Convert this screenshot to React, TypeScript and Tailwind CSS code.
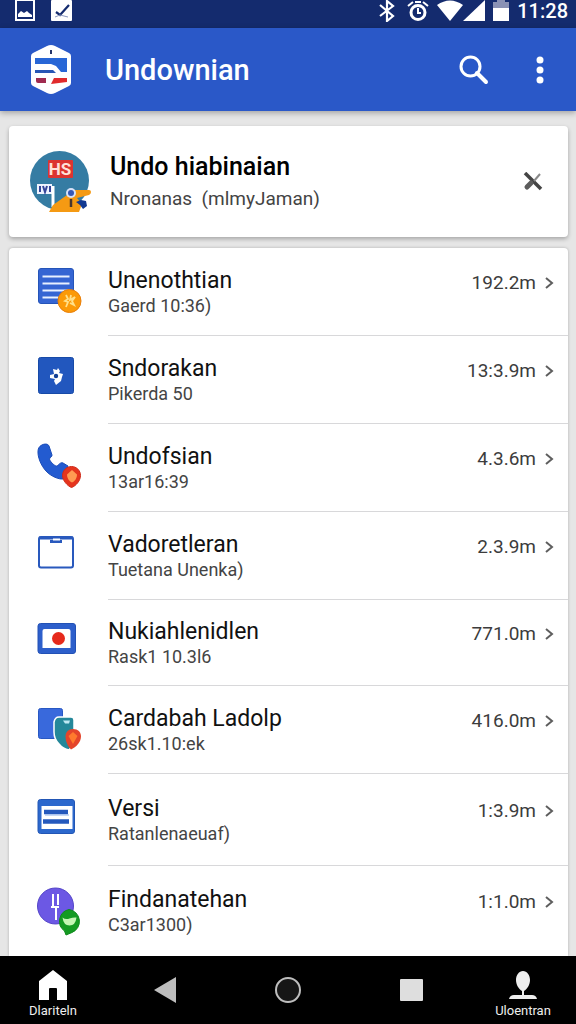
import type { ReactNode } from "react";

type Item = {
  title: string;
  note: string;
  value: string;
  height: string;
  icon: ReactNode;
};

const items: Item[] = [
  {
    title: "Unenothtian",
    note: "Gaerd 10:36)",
    value: "192.2m",
    height: "h-[88px]",
    icon: (
      <>
        <rect x="0.5" y="0.5" width="35" height="35" rx="2.5" fill="#3565d3" stroke="#2554b8" />
        <path d="M4.5 8.5h27M4.5 15.5h27M4.5 22.5h27M4.5 29.5h16" stroke="#e8f0ff" strokeWidth="2.2" />
        <circle cx="31.5" cy="33" r="11.5" fill="#fb9a08" stroke="#e97f0a" />
        <path d="M28 27l2 4-3 2 3 1-2 5M33 27l-1 5 5-3-3 4 2 4-4-2" stroke="#ffe08a" strokeWidth="1.8" fill="none" />
      </>
    ),
  },
  {
    title: "Sndorakan",
    note: "Pikerda 50",
    value: "13:3.9m",
    height: "h-[88px]",
    icon: (
      <>
        <rect x="0.5" y="1.5" width="35" height="36" rx="2" fill="#2257be" stroke="#174aa7" />
        <path
          d="M15 13l4 1 1-2 2 3-1 2 4 1-1 3-1 4-5 4-2-4 1-2-5-1v-3l4-1z"
          fill="#fff"
        />
        <circle cx="18" cy="20" r="2.2" fill="#123f94" />
      </>
    ),
  },
  {
    title: "Undofsian",
    note: "13ar16:39",
    value: "4.3.6m",
    height: "h-[88px]",
    icon: (
      <>
        <path
          d="M3 1.5C6-.5 10-.5 11 2l3 9c.5 1.5-2.5 2.500-2.500 4 0 2 5 7 7 7 1.500 0 4-4.500 6.500-3l5 3-5 13c-4 .5-12-2.500-17-8C3 21.500-.5 13 0 7c.2-3 1.500-4.500 3-5.500z"
          fill="#235bd0"
          stroke="#1c4db8"
        />
        <path
          d="M33.500 22.500c5 0 9 4 9 9s-4.500 10.500-9 12c-4-1.500-9-7-9-12s4-9 9-9z"
          fill="#e5341d"
          stroke="#cf2a18"
        />
        <path d="M34 26l5 4.500c0 4-2.500 7-5 8-2.500-1-5-4-5-8z" fill="#ff9a52" />
      </>
    ),
  },
  {
    title: "Vadoretleran",
    note: "Tuetana Unenka)",
    value: "2.3.9m",
    height: "h-[88px]",
    icon: (
      <>
        <rect x="1" y="5" width="34" height="30.500" rx="2" fill="#fff" stroke="#2959bd" strokeWidth="2" />
        <path d="M1 6h34M12 9.500h12" stroke="#2959bd" strokeWidth="3" />
        <path d="M15 7.500h7" stroke="#fff" strokeWidth="2" />
      </>
    ),
  },
  {
    title: "Nukiahlenidlen",
    note: "Rask1 10.3l6",
    value: "771.0m",
    height: "h-[86px]",
    icon: (
      <>
        <rect x="0" y="4.500" width="37.500" height="30" rx="2.500" fill="#2d5fcb" stroke="#2251b5" />
        <path d="M4.500 12q0-2 2-2h24q2 0 2 2v17h-28z" fill="#fff" />
        <circle cx="20.500" cy="19.500" r="6.500" fill="#e62a1c" />
      </>
    ),
  },
  {
    title: "Cardabah Ladolp",
    note: "26sk1.10:ek",
    value: "416.0m",
    height: "h-[88px]",
    icon: (
      <>
        <rect x="0.500" y="2.500" width="24" height="30" rx="2" fill="#3969dc" stroke="#2858c3" />
        <path
          d="M21 11h12q3 0 3 3v18q-1 8-5 12-6-1-10-6-5-5-5-12v-10q1-5 5-5z"
          fill="#24889a"
          stroke="#fff"
          strokeWidth="1.500"
        />
        <path d="M25 14.500h7l-1 3h-4z" fill="#bfe9f4" />
        <path d="M35 23c5 0 8 3 8 7.500 0 5-4 10-10 13-3-3-5.500-8-5.500-13 0-4.500 3-7.500 7.500-7.500z" fill="#e4452b" />
        <path d="M35 26l4.500 4-4.500 8-4.500-8z" fill="#ff7a2e" />
      </>
    ),
  },
  {
    title: "Versi",
    note: "Ratanlenaeuaf)",
    value: "1:3.9m",
    height: "h-[92px]",
    icon: (
      <>
        <rect x="0" y="3.500" width="36.500" height="34" rx="2.500" fill="#2c68cd" stroke="#2256b5" />
        <path d="M3.500 10h31v23h-31z" fill="#fff" />
        <path d="M6 16h24M5 25.500h26" stroke="#2559bd" strokeWidth="4.500" />
        <path d="M7 19h24" stroke="#8fb1ec" />
      </>
    ),
  },
  {
    title: "Findanatehan",
    note: "C3ar1300)",
    value: "1:1.0m",
    height: "min-h-[88px] grow",
    icon: (
      <>
        <circle cx="17.500" cy="19" r="18" fill="#6c58e4" stroke="#5546c8" />
        <path d="M15 7v13h6M20 7v11M18 20v13M13 20h3" stroke="#fff" strokeWidth="2" fill="none" />
        <path d="M31 22.500a12 12 0 0 1 3 23l-6 2.500-1.500-4A12 12 0 0 1 31 22.500z" fill="#149b22" stroke="#0f8a1c" />
        <path d="M24.500 30.500q3 2.500 7 1t7-1q-1 8-7 8t-7-8z" fill="#c5f6b4" />
      </>
    ),
  },
];

function StatusBar() {
  return (
    <div className="flex h-7 items-start justify-between bg-[#142b6e] pr-2 pl-[15px] text-white">
      <div className="flex gap-4">
        <svg width="20" height="21" viewBox="0 0 20 21" fill="none">
          <path d="M1 0h18v20H1z" stroke="#fff" strokeWidth="2" />
          <path d="M3 17v-3l3-3 3 2 3-2 2 2 3 2v2z" fill="#fff" />
        </svg>
        <svg width="21" height="21" viewBox="0 0 21 21" fill="none">
          <rect width="21" height="21" rx="1" fill="#fff" />
          <path d="M5 12l4 3 9-10" stroke="#142b6e" strokeWidth="2.200" />
          <path d="M4 17l5-2 8 2" stroke="#8c99c0" />
        </svg>
      </div>
      <div className="flex items-start">
        <svg width="16" height="22" viewBox="0 0 16 22" fill="none" stroke="#fff" strokeWidth="2.200">
          <path d="M1 5l13 11-6 5V1l6 5L1 16" />
        </svg>
        <svg className="ml-3" width="22" height="22" viewBox="0 0 22 22" fill="none" stroke="#fff">
          <circle cx="11" cy="12.500" r="7" strokeWidth="3" />
          <path d="M11 8v5h3" strokeWidth="2" />
          <path d="M1 6l5-4M21 6l-5-4M8 2h6" strokeWidth="2" />
        </svg>
        <svg className="ml-2" width="48" height="21" viewBox="0 0 48 21" fill="#fff">
          <path d="M0 5Q13-4 26 5L13 21z" />
          <path d="M26 21L48 0v21z" />
        </svg>
        <svg className="ml-2" width="16" height="21" viewBox="0 0 16 21">
          <path d="M0 2h4V0h8v2h4v8H0z" fill="#8a92b5" />
          <path d="M0 8h16v13H0z" fill="#fff" />
        </svg>
        <span className="ml-2 text-[20px] leading-[22px] font-medium">11:28</span>
      </div>
    </div>
  );
}

function AppBar() {
  return (
    <header className="relative flex h-[83px] items-center bg-[#2a58c8] pr-5 pl-[31px] text-white shadow-[0_2px_6px_rgba(0,0,0,0.3)]">
      <svg width="40" height="49" viewBox="0 0 40 49">
        <path d="M20 0q2 0 4 1l14 7q2 1 2 3v27q0 2-2 3l-14 7q-4 2-8 0L2 41q-2-1-2-3V11q0-2 2-3l14-7q2-1 4-1z" fill="#fff" />
        <path d="M20 5v4" stroke="#27356b" strokeWidth="2" />
        <path d="M4 13h32v14h-6l-5-6-5-2H4z" fill="#2866d6" />
        <path d="M4 25h18l3 3H4z" fill="#2856b5" />
        <path d="M5 33h10v5H7q-2 0-2-2z" fill="#a02b50" />
        <path d="M23 33h13v4l-16 2z" fill="#e02a2c" />
      </svg>
      <h1 className="ml-[34px] flex-1 text-[29px] leading-9 font-medium">Undownian</h1>
      <button type="button" aria-label="Search" className="flex size-12 items-center justify-center">
        <svg width="30" height="30" viewBox="0 0 30 30" fill="none" stroke="#fff">
          <circle cx="11.500" cy="11.500" r="9.500" strokeWidth="3" />
          <path d="M18 18l9 9" strokeWidth="4" strokeLinecap="round" />
        </svg>
      </button>
      <button type="button" aria-label="More options" className="ml-[26px] flex h-12 w-8 items-center justify-center">
        <svg width="8" height="28" viewBox="0 0 8 28" fill="#fff">
          <circle cx="4" cy="4" r="3.500" />
          <circle cx="4" cy="14" r="3.500" />
          <circle cx="4" cy="24" r="3.500" />
        </svg>
      </button>
    </header>
  );
}

function ProfileCard() {
  return (
    <section className="flex h-[111px] items-center rounded bg-white pr-[23px] pl-[21px] shadow-[0_2px_4px_rgba(0,0,0,0.28)]">
      <svg width="61" height="62" viewBox="0 0 61 62">
        <circle cx="29.500" cy="29.500" r="29.500" fill="#357ca3" />
        <rect x="18" y="9" width="25" height="18" rx="1" fill="#dc3430" />
        <text x="30" y="24" textAnchor="middle" fontSize="17" fontWeight="700" fill="#ffe1d8">
          HS
        </text>
        <path d="M7 33h15v10H7z" fill="#eef3ff" />
        <path d="M10 35v6M13 35l2 6 2-6M20 35v6" stroke="#34459a" strokeWidth="2" fill="none" />
        <path d="M23 35v21" stroke="#fff" strokeWidth="3" />
        <path d="M19 61l4-7 14-10 5-5h17q2 0 2 2t-2 3l-12 3 5 6-3 8z" fill="#f59a13" />
        <circle cx="41" cy="42" r="5" fill="#d8e2f8" />
        <circle cx="41" cy="42" r="3" fill="#3657b5" />
        <path d="M41 48v8" stroke="#48352f" strokeWidth="2.500" />
        <path d="M46 51l5-2 5 1 1 5-4 3-3-4z" fill="#123991" />
      </svg>
      <div className="ml-[19px] min-w-0 flex-1">
        <h2 className="text-[25px] leading-[34px] font-medium text-black">Undo hiabinaian</h2>
        <p className="text-[19px] leading-[30px] text-[#444]">Nronanas&nbsp; (mlmyJaman)</p>
      </div>
      <button type="button" aria-label="Close" className="flex size-6 items-center justify-center">
        <svg className="shrink-0" width="20" height="20" viewBox="0 0 20 20" fill="none">
          <path d="M2 1l16 16" stroke="#444" strokeWidth="3.500" />
          <path d="M17 2l-6 7" stroke="#888" strokeWidth="2" />
          <path d="M8 11l-4 4" stroke="#5c5c5c" strokeWidth="5" strokeLinecap="round" />
        </svg>
      </button>
    </section>
  );
}

function ListRow({ item, last }: { item: Item; last: boolean }) {
  return (
    <li className={`flex ${item.height}`}>
      <a href="#" className="flex flex-1 items-stretch pl-[29px]">
        <svg className="shrink-0 self-center overflow-visible" width="44" height="48" viewBox="0 0 44 48">
          {item.icon}
        </svg>
        <div className={`ml-[26px] flex flex-1 items-center pr-3 ${last ? "" : "border-b border-[#d8d8da]"}`}>
          <div className="flex flex-1 items-start">
            <div className="flex-1">
              <div className="text-[23px] leading-7 text-[#111]">{item.title}</div>
              <div className="text-[18px] leading-[22px] text-[#444]">{item.note}</div>
            </div>
            <span className="text-[19px] leading-8 text-[#3c3c3c]">{item.value}</span>
            <svg className="mt-[9px] ml-2" width="12" height="14" viewBox="0 0 12 14" fill="none">
              <path d="M2 2l6 5-6 5" stroke="#5e5e5e" strokeWidth="2" />
            </svg>
          </div>
        </div>
      </a>
    </li>
  );
}

function NavBar() {
  return (
    <nav className="flex h-[68px] items-center justify-between bg-black px-6 text-[#eee]">
      <a href="#" className="flex w-[58px] flex-col items-center pt-2">
        <svg width="28" height="30" viewBox="0 0 28 30">
          <path d="M14 0l14 11v19H18V19q0-1-1-1h-6q-1 0-1 1v11H0V11z" fill="#fff" />
        </svg>
        <span className="mt-[3px] text-[13px] leading-4">Dlariteln</span>
      </a>
      <button type="button" aria-label="Back" className="flex h-12 w-20 items-center justify-center">
        <svg width="22" height="26" viewBox="0 0 22 26">
          <path d="M22 0v26L0 13z" fill="#bdbdbd" />
        </svg>
      </button>
      <button type="button" aria-label="Home" className="flex h-12 w-20 items-center justify-center">
        <svg width="28" height="28" viewBox="0 0 28 28">
          <circle cx="14" cy="14" r="12" fill="#161616" stroke="#bdbdbd" strokeWidth="2" />
        </svg>
      </button>
      <button type="button" aria-label="Recent apps" className="flex h-12 w-20 items-center justify-center">
        <span className="h-[22px] w-[23px] rounded-[1px] bg-[#dedede]" />
      </button>
      <a href="#" className="flex w-[58px] flex-col items-center pt-2">
        <svg width="28" height="30" viewBox="0 0 28 30" fill="#eee">
          <path d="M14 1c4 0 7 4 7 9s-3 9-6 11v4h-2v-4c-3-2-6-6-6-11s3-9 7-9z" />
          <path d="M0 29q1-4 5-4h18q4 0 5 4z" />
        </svg>
        <span className="mt-[3px] text-[13px] leading-4">Uloentran</span>
      </a>
    </nav>
  );
}

export default function App() {
  return (
    <div className="flex min-h-screen flex-col bg-[#e6e6e6] font-['Roboto','Liberation_Sans',sans-serif]">
      <StatusBar />
      <AppBar />
      <main className="flex flex-1 flex-col gap-[11px] pt-[15px] pr-2 pl-[9px]">
        <ProfileCard />
        <ul className="flex flex-1 flex-col rounded-t-sm bg-white shadow-[0_0_3px_rgba(0,0,0,0.25)]">
          {items.map((item, index) => (
            <ListRow key={item.title} item={item} last={index === items.length - 1} />
          ))}
        </ul>
      </main>
      <NavBar />
    </div>
  );
}
